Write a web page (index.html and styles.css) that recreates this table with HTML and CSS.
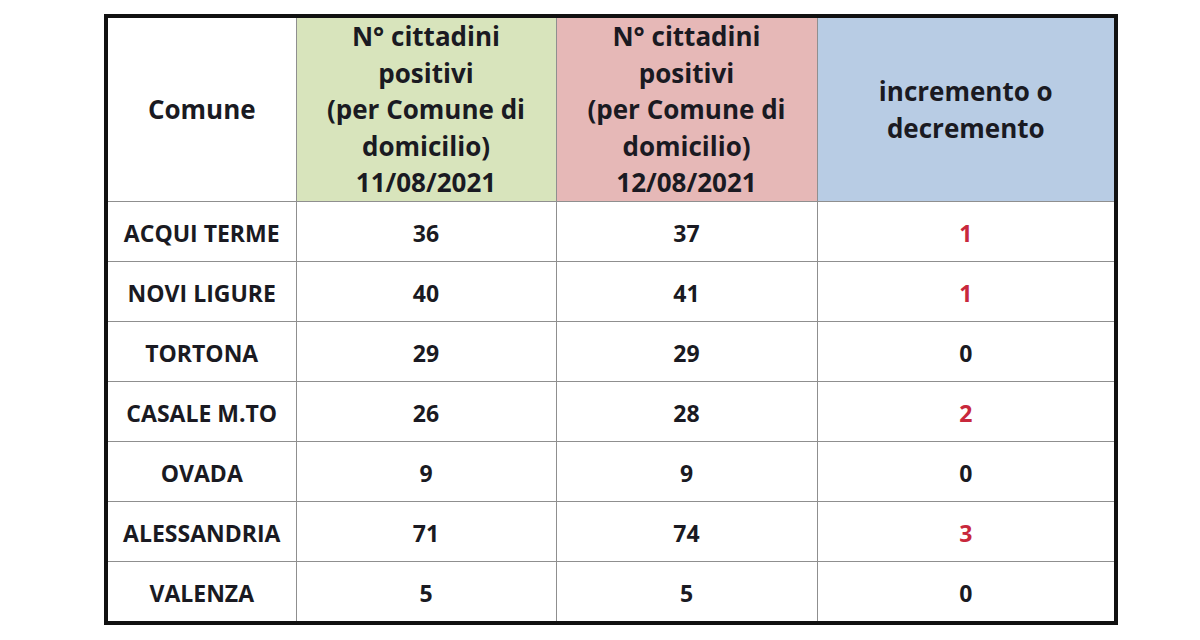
FILE: index.html
```html
<!DOCTYPE html>
<html lang="it">
<head>
<meta charset="utf-8">
<title>Positivi per Comune</title>
<link rel="stylesheet" href="styles.css">
</head>
<body>
<div class="page">
<table class="data">
  <colgroup>
    <col class="c-comune">
    <col class="c-d1">
    <col class="c-d2">
    <col class="c-inc">
  </colgroup>
  <thead>
    <tr class="head">
      <th class="h-comune">Comune</th>
      <th class="h-green">N° cittadini<br>positivi<br>(per Comune di<br>domicilio)<br>11/08/2021</th>
      <th class="h-pink">N° cittadini<br>positivi<br>(per Comune di<br>domicilio)<br>12/08/2021</th>
      <th class="h-blue">incremento o<br>decremento</th>
    </tr>
  </thead>
  <tbody>
    <tr><td class="name">ACQUI TERME</td><td>36</td><td>37</td><td class="up">1</td></tr>
    <tr><td class="name">NOVI LIGURE</td><td>40</td><td>41</td><td class="up">1</td></tr>
    <tr><td class="name">TORTONA</td><td>29</td><td>29</td><td>0</td></tr>
    <tr><td class="name">CASALE M.TO</td><td>26</td><td>28</td><td class="up">2</td></tr>
    <tr><td class="name">OVADA</td><td>9</td><td>9</td><td>0</td></tr>
    <tr><td class="name">ALESSANDRIA</td><td>71</td><td>74</td><td class="up">3</td></tr>
    <tr><td class="name">VALENZA</td><td>5</td><td>5</td><td>0</td></tr>
  </tbody>
</table>
</div>
</body>
</html>
```

FILE: styles.css
```css
html, body {
  margin: 0;
  padding: 0;
  background: #ffffff;
}

.page {
  width: 1200px;
  height: 640px;
  padding: 14px 0 0 104px;
  box-sizing: border-box;
}

.data {
  border-collapse: collapse;
  table-layout: fixed;
  width: 1010px;
  border: 4px solid #111111;
  font-family: "Open Sans", Lato, "Liberation Sans", sans-serif;
  font-weight: 700;
  color: #1a1a22;
}

.c-comune { width: 190px; }
.c-d1 { width: 260px; }
.c-d2 { width: 261px; }
.c-inc { width: 299px; }

.data th,
.data td {
  border: 1px solid #8f8f8f;
  text-align: center;
  vertical-align: middle;
  padding: 0;
}

.head th {
  height: 183px;
  font-size: 26px;
  line-height: 36.5px;
  font-weight: 700;
  color: #1a1a22;
}

.h-comune { background: #ffffff; }
.h-green { background: #d8e4bc; }
.h-pink { background: #e6b8b7; }
.h-blue { background: #b8cce4; }

.data td {
  height: 56px;
  padding-top: 3px;
  font-size: 23px;
  line-height: 28px;
}

.data td.up {
  color: #c8283c;
}
```
